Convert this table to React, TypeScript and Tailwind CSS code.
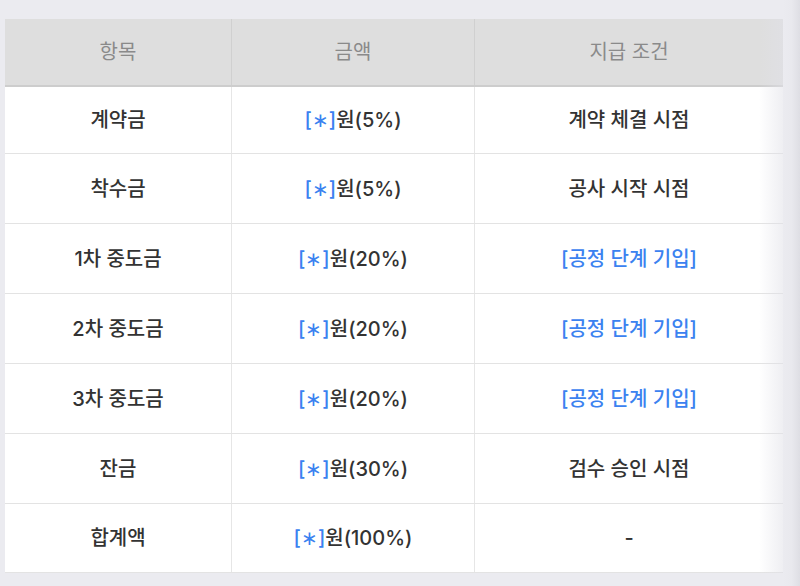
import React from "react";

const rows: { item: string; amount: string; cond: string; condBlue?: boolean; h: string }[] = [
  { item: "계약금", amount: "원(5%)", cond: "계약 체결 시점", h: "h-[67px]" },
  { item: "착수금", amount: "원(5%)", cond: "공사 시작 시점", h: "h-[70px]" },
  { item: "1차 중도금", amount: "원(20%)", cond: "[공정 단계 기입]", condBlue: true, h: "h-[70px]" },
  { item: "2차 중도금", amount: "원(20%)", cond: "[공정 단계 기입]", condBlue: true, h: "h-[70px]" },
  { item: "3차 중도금", amount: "원(20%)", cond: "[공정 단계 기입]", condBlue: true, h: "h-[70px]" },
  { item: "잔금", amount: "원(30%)", cond: "검수 승인 시점", h: "h-[70px]" },
  { item: "합계액", amount: "원(100%)", cond: "-", h: "h-[69px]" },
];

export default function App() {
  return (
    <div
      className="relative flex h-[586px] w-[800px] overflow-hidden bg-[#ebebf0]"
      style={{ fontFamily: 'Inter, "Noto Sans CJK KR", "Noto Sans", sans-serif' }}
    >
      <div className="pl-[5px] pt-[19px]">
        <div className="relative w-[778px] bg-white">
          <div className="grid h-[68px] grid-cols-[227px_243px_308px] border-b-2 border-[#cdcdcd] bg-[#dedede] text-[20px] text-[#8a8a8a]">
            <div className="flex items-center justify-center border-r border-[#d0d0d0]">항목</div>
            <div className="flex items-center justify-center border-r border-[#d0d0d0]">금액</div>
            <div className="flex items-center justify-center">지급 조건</div>
          </div>
          {rows.map((r, i) => (
            <div
              key={i}
              className={`grid grid-cols-[227px_243px_308px] border-b border-[#e3e3e3] text-[20px] font-medium text-[#333333] ${r.h}`}
            >
              <div className="flex items-center justify-center border-r border-[#e6e6e6]">{r.item}</div>
              <div className="flex items-center justify-center border-r border-[#e6e6e6]">
                <span className="text-[#3b82f0]">[∗]</span>
                <span>{r.amount}</span>
              </div>
              <div className={`flex items-center justify-center ${r.condBlue ? "text-[#3b82f0]" : ""}`}>{r.cond}</div>
            </div>
          ))}
          <div className="pointer-events-none absolute right-0 top-0 h-full w-[24px] bg-gradient-to-r from-[rgba(235,235,240,0)] to-[rgba(225,225,232,0.55)]" />
        </div>
      </div>
      <div className="h-full flex-1 bg-gradient-to-r from-[#ebebf0] via-[#e9e9ee] to-[#dedee4]" />
    </div>
  );
}
